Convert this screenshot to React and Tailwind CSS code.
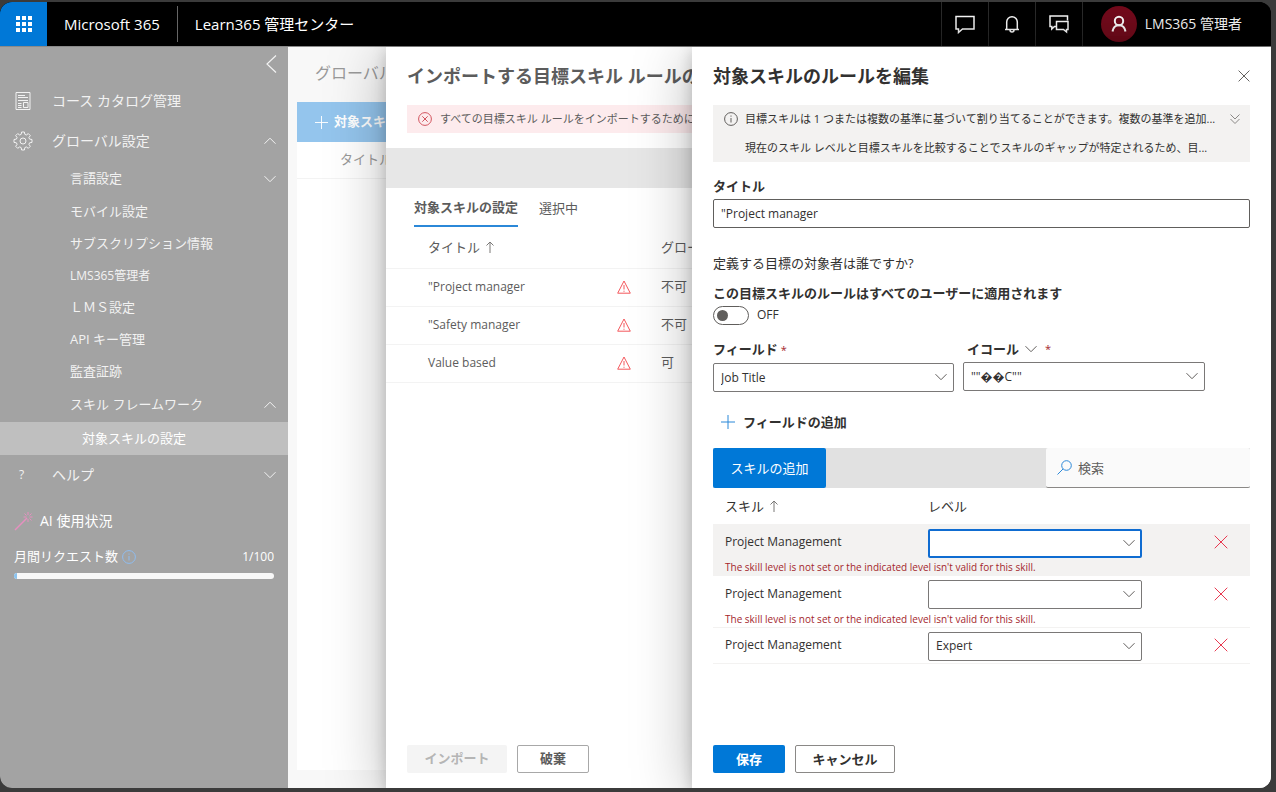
import React, { useState } from 'react';

// Thin line icons
const Icon = ({ children, size = 16, box = 16, stroke = 1, className = '' }) => (
  <svg
    width={size}
    height={size}
    viewBox={`0 0 ${box} ${box}`}
    fill="none"
    stroke="currentColor"
    strokeWidth={stroke}
    className={`flex-shrink-0 ${className}`}
    aria-hidden="true"
  >
    {children}
  </svg>
);

const ChevronDown = ({ className }) => (
  <Icon size={12} box={12} className={className}><path d="M0.5 3.2 6 8.7l5.5-5.5" /></Icon>
);

const ChevronUp = ({ className }) => (
  <Icon size={12} box={12} className={className}><path d="M0.5 8.7 6 3.2l5.5 5.5" /></Icon>
);

const ArrowUp = () => (
  <Icon size={12} box={12} className="text-[#7a7877]"><path d="M6 12V1M2.5 4.5 6 1l3.5 3.5" /></Icon>
);

const Cross = ({ size = 14, className }) => (
  <Icon size={size} box={14} className={className}><path d="M0.7 0.7l12.6 12.6M13.3 0.7L0.7 13.3" /></Icon>
);

const Plus = ({ size = 14, className }) => (
  <Icon size={size} box={14} className={className}><path d="M7 0v14M0 7h14" /></Icon>
);

const InfoCircle = ({ className }) => (
  <Icon size={14} box={14} className={className}>
    <circle cx="7" cy="7" r="6.4" />
    <path d="M7 6v4.5M7 3.5v1.2" />
  </Icon>
);

const Warning = () => (
  <Icon size={14} box={14} className="text-[#f4575c]">
    <path d="M7 1 13.3 13.2H0.7Z" />
    <path d="M7 5v4.5M7 10.7v1.1" />
  </Icon>
);

const Gear = () => (
  <Icon size={20} box={20}>
    <path d="M8.6 1h2.8l.4 2.3 1.5.7 2-1.4 2 2-1.4 2 .7 1.5 2.4.4v2.9l-2.4.4-.7 1.5 1.4 2-2 2-2-1.4-1.5.7-.4 2.4H8.6l-.4-2.4-1.5-.7-2 1.4-2-2 1.4-2-.7-1.5L1 11.4V8.5l2.4-.4.7-1.5-1.4-2 2-2 2 1.4 1.5-.7z" />
    <circle cx="10" cy="10" r="3" />
  </Icon>
);

const Catalog = () => (
  <Icon size={18} box={18}>
    <path d="M2 0.5h14v17H2zM4 3.5h7M4 5.5h10M4 8.5h10M4 11.5h3.5M4 13.5h3.5M4 15.5h3.5M9.5 10.5h4.5v5H9.5z" />
  </Icon>
);

const Wand = () => (
  <Icon size={20} box={20} className="text-[#e78fc0]">
    <path d="M1 19 13 7" strokeWidth="1.4" />
    <path d="M14 1v3M14 8v3M9.5 6h3M15.5 6h3M10.5 2.5l2 2M15.5 7.5l2 2M17.5 2.5l-2 2" />
  </Icon>
);

const subItems = [
  { label: 'モバイル設定' },
  { label: 'サブスクリプション情報' },
  { label: 'LMS365管理者', latin: true },
  { label: 'ＬＭＳ設定' },
  { label: 'API キー管理' },
  { label: '監査証跡' },
];

const importRows = [
  { title: '"Project manager', global: '不可' },
  { title: '"Safety manager', global: '不可' },
  { title: 'Value based', global: '可' },
];

const skillRows = [
  { id: 1, name: 'Project Management', level: '', invalid: true, active: true },
  { id: 2, name: 'Project Management', level: '', invalid: true },
  { id: 3, name: 'Project Management', level: 'Expert' },
];

const Header = () => (
  <header className="flex h-11 flex-shrink-0 items-stretch bg-black text-white">
    <button aria-label="アプリ起動ツール" className="flex w-[47px] items-center justify-center bg-[#0078d7]">
      <svg width="16" height="16" viewBox="0 0 16 16" fill="currentColor" aria-hidden="true">
        {[0, 6, 12].map(y => [0, 6, 12].map(x => (
          <rect key={`${x}-${y}`} x={x} y={y} width="4" height="4" />
        )))}
      </svg>
    </button>
    <a href="#m365" className="flex items-center px-[17px] text-[15px]">Microsoft 365</a>
    <div className="my-1 w-px bg-[#666]" />
    <a href="#learn365" className="flex items-center pl-[17px] text-[15px]">Learn365 管理センター</a>

    <div className="ml-auto flex">
      <button aria-label="フィードバック" className="flex w-[47px] items-center justify-center border-l border-[#2b2b2b]">
        <Icon size={20} box={20} stroke={1.5}><path d="M1 2.5h18v12.5H7.5L3.5 18.5V15H1z" /></Icon>
      </button>
      <button aria-label="通知" className="flex w-[47px] items-center justify-center border-l border-[#2b2b2b]">
        <Icon size={18} box={18} stroke={1.5}>
          <path d="M2 14.5h14M3.7 14.5V7a5.3 5.3 0 0 1 10.6 0v7.5M7 15a2 2 0 0 0 4 0" />
        </Icon>
      </button>
      <button aria-label="チャット" className="flex w-[47px] items-center justify-center border-l border-[#2b2b2b]">
        <Icon size={20} box={20} stroke={1.5}>
          <path d="M7 12.5H5.5L2.8 15v-2.5H1V2h17.5v4.5" />
          <path d="M7.5 7.5H19v8h-1.500V18l-3-2.5h-7z" />
        </Icon>
      </button>
      <button className="flex items-center gap-2 border-l border-[#2b2b2b] pl-[18px] pr-[29px] text-sm">
        <span className="flex h-9 w-9 items-center justify-center rounded-full bg-[#750b1c]">
          <Icon size={18} box={18} stroke={2}>
            <circle cx="9" cy="6" r="4.2" />
            <path d="M2.5 16.5C3.2 12.5 5.5 10.2 9 10.2s5.8 2.3 6.5 6.3" />
          </Icon>
        </span>
        LMS365 管理者
      </button>
    </div>
  </header>
);

const Sidebar = () => (
  <nav className="w-72 flex-shrink-0 bg-[#a3a3a3] text-[#f2f2f2]">
    <div className="flex h-[34px] items-center justify-end pr-2">
      <button aria-label="メニューを折りたたむ">
        <Icon size={18} box={18} stroke={1.2}><path d="M14 0.5 5 9l9 8.5" /></Icon>
      </button>
    </div>
    <a href="#catalog" className="flex h-10 items-center pl-[14px] text-sm">
      <span className="w-[38px]"><Catalog /></span>
      コース カタログ管理
    </a>
    <button className="flex h-10 w-full items-center pl-[13px] pr-3 text-sm">
      <span className="w-[39px]"><Gear /></span>
      グローバル設定
      <ChevronUp className="ml-auto" />
    </button>

    <div className="text-[13px]">
      <button className="flex h-[35px] w-full items-center pl-[70px] pr-3">
        言語設定
        <ChevronDown className="ml-auto" />
      </button>
      {subItems.map(item => (
        <a
          key={item.label}
          href="#settings"
          className={`flex h-8 items-center pl-[70px] ${item.latin ? 'text-xs' : ''}`}
        >
          {item.label}
        </a>
      ))}
      <button className="flex h-[34px] w-full items-center pl-[70px] pr-3">
        スキル フレームワーク
        <ChevronUp className="ml-auto" />
      </button>
      <a href="#target-skills" className="flex h-[33px] items-center bg-[#bfbfbf] pl-[82px] text-white">
        対象スキルの設定
      </a>
    </div>

    <button className="flex h-10 w-full items-center pl-[19px] pr-3 text-sm">
      <span className="w-[33px] text-left text-xs">?</span>
      ヘルプ
      <ChevronDown className="ml-auto" />
    </button>

    {/* AI usage */}
    <div className="px-[14px] pt-4 text-white">
      <div className="flex h-5 items-center gap-[6px] text-sm">
        <Wand />
        AI 使用状況
      </div>
      <div className="mt-4 flex h-5 items-center text-[13px]">
        月間リクエスト数
        <InfoCircle className="ml-1 text-[#8fbdf0]" />
        <span className="ml-auto text-xs">1/100</span>
      </div>
      <div className="mt-[6px] h-[6px] overflow-hidden rounded-full bg-[#f8f8f8]">
        <div className="h-full bg-[#8cc3ee]" style={{ width: '1%' }} />
      </div>
    </div>
  </nav>
);

const ImportPanel = () => (
  <section
    aria-label="インポートする目標スキル ルールの選択"
    className="absolute inset-y-0 right-0 flex w-[885px] flex-col overflow-hidden whitespace-nowrap bg-white text-[#5c5c5c] shadow-[0_8px_56px_rgba(0,0,0,0.28),0_4px_14px_rgba(0,0,0,0.18)]"
  >
    <h2 className="mt-4 px-[21px] text-lg font-bold leading-[26px]">インポートする目標スキル ルールの選択</h2>
    <div className="mx-[21px] mt-4 flex h-7 items-center gap-2 bg-[#fdebed] pl-[11px] text-[11px]">
      <Icon size={14} box={14} className="text-[#d2555f]">
        <circle cx="7" cy="7" r="6.4" />
        <path d="M4.3 4.3l5.4 5.4M9.7 4.3 4.3 9.7" />
      </Icon>
      すべての目標スキル ルールをインポートするためには、エラーを修正してください。
    </div>
    <div className="mt-[15px] h-10 bg-[#e7e7e7]" />
    <div className="mt-[3px] flex gap-[21px] px-7 text-[13px]" role="tablist">
      <button role="tab" aria-selected="true" className="h-9 border-b-2 border-[#2b88d8] font-bold">
        対象スキルの設定
      </button>
      <button role="tab" aria-selected="false" className="h-9">選択中</button>
    </div>
    <table className="w-full table-fixed border-collapse text-left text-[13px]">
      <thead>
        <tr className="h-[41px] border-b border-[#f3f3f3]">
          <th className="w-[231px] pl-[42px] font-normal">
            <span className="flex items-center gap-1">タイトル <ArrowUp /></span>
          </th>
          <th className="w-11" aria-label="状態" />
          <th className="font-normal">グローバル</th>
        </tr>
      </thead>
      <tbody>
        {importRows.map(row => (
          <tr key={row.title} className="h-[38px] border-b border-[#f3f3f3]">
            <td className="pl-[42px] text-xs">{row.title}</td>
            <td><Warning /></td>
            <td>{row.global}</td>
          </tr>
        ))}
      </tbody>
    </table>
    <div className="mb-[15px] mt-auto flex gap-[10px] px-[21px] text-[13px] font-bold">
      <button disabled className="h-7 w-[100px] rounded-xs bg-[#f4f4f4] text-[#b5b5b5]">インポート</button>
      <button className="h-7 w-[72px] rounded-xs border border-[#a8a8a8]">破棄</button>
    </div>
  </section>
);

const Dropdown = ({ className = '', active, ...props }) => (
  <div className={`relative ${className}`}>
    <select
      className={`h-[29px] w-full appearance-none rounded-xs bg-white px-[7px] text-xs outline-none ${
        active ? 'border-2 border-[#0f6cd1]' : 'border border-[#7a7877]'
      }`}
      {...props}
    />
    <ChevronDown className="pointer-events-none absolute right-[7px] top-2 text-[#605e5c]" />
  </div>
);

const EditPanel = () => {
  const [title, setTitle] = useState('"Project manager');
  const [applyAll, setApplyAll] = useState(false);

  return (
    <section
      aria-label="対象スキルのルールを編集"
      className="absolute inset-y-0 right-0 flex w-[579px] flex-col bg-white px-[21px] text-[13px] leading-5 text-[#323130] shadow-[0_8px_56px_rgba(0,0,0,0.28),0_4px_14px_rgba(0,0,0,0.18)]"
    >
      <div className="mt-4 flex items-center justify-between">
        <h2 className="text-lg font-bold leading-[26px]">対象スキルのルールを編集</h2>
        <button aria-label="閉じる"><Cross size={12} className="text-[#484644]" /></button>
      </div>

      {/* Info message */}
      <div className="mt-4 flex bg-[#f3f2f1] py-1 pl-[11px] pr-[9px]">
        <InfoCircle className="mt-[3px] text-[#605e5c]" />
        <div className="ml-[7px] min-w-0 flex-1 whitespace-nowrap text-[11px]">
          <p className="leading-5">目標スキルは 1 つまたは複数の基準に基づいて割り当てることができます。複数の基準を追加...</p>
          <p className="mt-[9px] leading-5">現在のスキル レベルと目標スキルを比較することでスキルのギャップが特定されるため、目...</p>
        </div>
        <button aria-label="詳細を表示" className="self-start pt-1 text-[#8a8886]">
          <Icon size={12} box={12}><path d="M1.5 1.5 6 6l4.500-4.500M1.5 6 6 10.5 10.5 6" /></Icon>
        </button>
      </div>

      <label htmlFor="rule-title" className="mt-[14px] font-bold">タイトル</label>
      <input
        id="rule-title"
        value={title}
        onChange={(e) => setTitle(e.target.value)}
        className="mt-[3px] h-[29px] w-full rounded-xs border border-[#605e5c] px-[7px] text-xs outline-none"
      />

      <p className="mt-[25px]">定義する目標の対象者は誰ですか?</p>
      <label htmlFor="apply-all" className="mt-[10px] font-bold">
        この目標スキルのルールはすべてのユーザーに適用されます
      </label>
      <div className="mt-[2px] flex items-center gap-2">
        <input
          id="apply-all"
          type="checkbox"
          role="switch"
          checked={applyAll}
          onChange={(e) => setApplyAll(e.target.checked)}
          className="h-[19px] w-9 appearance-none rounded-full border border-[#605e5c] px-[3px] py-[3px] before:block before:h-[11px] before:w-[11px] before:rounded-full before:bg-[#605e5c] checked:before:ml-auto"
        />
        <span className="text-xs leading-5">{applyAll ? 'ON' : 'OFF'}</span>
      </div>

      <div className="mt-[14px] flex gap-[9px]">
        <div className="w-[241px]">
          <label htmlFor="field" className="font-bold">
            フィールド<span className="pl-[3px] text-[11px] font-normal text-[#a4262c]">*</span>
          </label>
          <Dropdown id="field" className="mt-[3px]" defaultValue="Job Title">
            <option>Job Title</option>
          </Dropdown>
        </div>
        <div className="w-[242px]">
          <div className="flex items-center pl-1">
            <button id="operator" className="flex items-center gap-[6px] font-bold">
              イコール <ChevronDown className="text-[#605e5c]" />
            </button>
            <span className="pl-2 text-[11px] text-[#a4262c]">*</span>
          </div>
          <Dropdown className="mt-[3px]" aria-labelledby="operator" defaultValue={'""\uFFFD\uFFFDC""'}>
            <option>{'""\uFFFD\uFFFDC""'}</option>
          </Dropdown>
        </div>
      </div>

      <button className="mt-5 flex items-center gap-2 self-start pl-2 font-bold">
        <Plus className="text-[#2b88d8]" />
        フィールドの追加
      </button>

      {/* Skills toolbar */}
      <div className="mt-4 flex h-10 bg-[#e1e1e1]">
        <button className="w-[113px] rounded-xs bg-[#0078d7] text-white">スキルの追加</button>
        <label className="ml-auto flex w-[204px] items-center gap-[6px] rounded-xs border-b border-[#8a8886] bg-[#fafafa] pl-[11px]">
          <Icon size={15} box={15} className="text-[#2b88d8]">
            <circle cx="9.5" cy="5.5" r="4.8" />
            <path d="M6 9 0.5 14.5" />
          </Icon>
          <input type="search" aria-label="検索" placeholder="検索" className="w-full min-w-0 outline-none placeholder:text-[#605e5c]" />
        </label>
      </div>

      <table className="w-full table-fixed border-collapse text-left">
        <thead>
          <tr className="h-9">
            <th className="w-[215px] pl-3 font-normal">
              <span className="flex items-center gap-1">スキル <ArrowUp /></span>
            </th>
            <th className="w-[214px] font-normal">レベル</th>
            <th aria-label="削除" />
          </tr>
        </thead>
        {skillRows.map(row => (
          <tbody key={row.id} className={`border-b border-[#f3f2f1] ${row.active ? 'bg-[#f3f2f1]' : ''}`}>
            <tr className="h-9">
              <td className="pl-3 text-xs">{row.name}</td>
              <td className="pt-[2px]">
                <Dropdown aria-label="レベル" active={row.active} defaultValue={row.level}>
                  <option value="" />
                  <option>Expert</option>
                </Dropdown>
              </td>
              <td>
                <button aria-label="削除" className="ml-[72px] block">
                  <Cross className="text-[#e8384f]" />
                </button>
              </td>
            </tr>
            {row.invalid && (
              <tr>
                <td colSpan={3} className="pl-3 text-[10px] leading-[15px] text-[#a4262c]">
                  The skill level is not set or the indicated level isn't valid for this skill.
                </td>
              </tr>
            )}
          </tbody>
        ))}
      </table>

      <div className="mb-[15px] mt-auto flex gap-[10px] font-bold">
        <button className="h-7 w-[72px] rounded-xs bg-[#0078d7] text-white">保存</button>
        <button className="h-7 w-[100px] rounded-xs border border-[#8a8886]">キャンセル</button>
      </div>
    </section>
  );
};

export default function App() {
  return (
    <div className="flex min-h-screen flex-col bg-[#3b3b3b] pb-1 pr-[5px] pt-[2px] font-['Open_Sans','Noto_Sans_CJK_JP',sans-serif]" lang="ja">
      <div className="flex flex-1 flex-col overflow-hidden rounded-xl bg-black">
        <Header />
        <div className="relative flex flex-1 border-t border-[#8a8a8a]">
          <Sidebar />
          <main className="flex min-w-0 flex-1 flex-col bg-[#f8f8f8] pb-[18px] pl-[9px] text-[#9a9a9a]">
            <h1 className="pb-4 pl-[18px] pt-[14px] text-base leading-[25px]">グローバル設定</h1>
            <div className="flex-1 bg-white">
              <button className="flex h-10 w-full items-center gap-[6px] bg-[#94c5ed] pl-[18px] text-[13px] font-bold text-white">
                <Plus size={13} />
                対象スキルの追加
              </button>
              <div className="flex h-[37px] items-center border-b border-[#f3f3f3] pl-[43px] text-[13px]">タイトル</div>
            </div>
          </main>
          <ImportPanel />
          <EditPanel />
        </div>
      </div>
    </div>
  );
}
